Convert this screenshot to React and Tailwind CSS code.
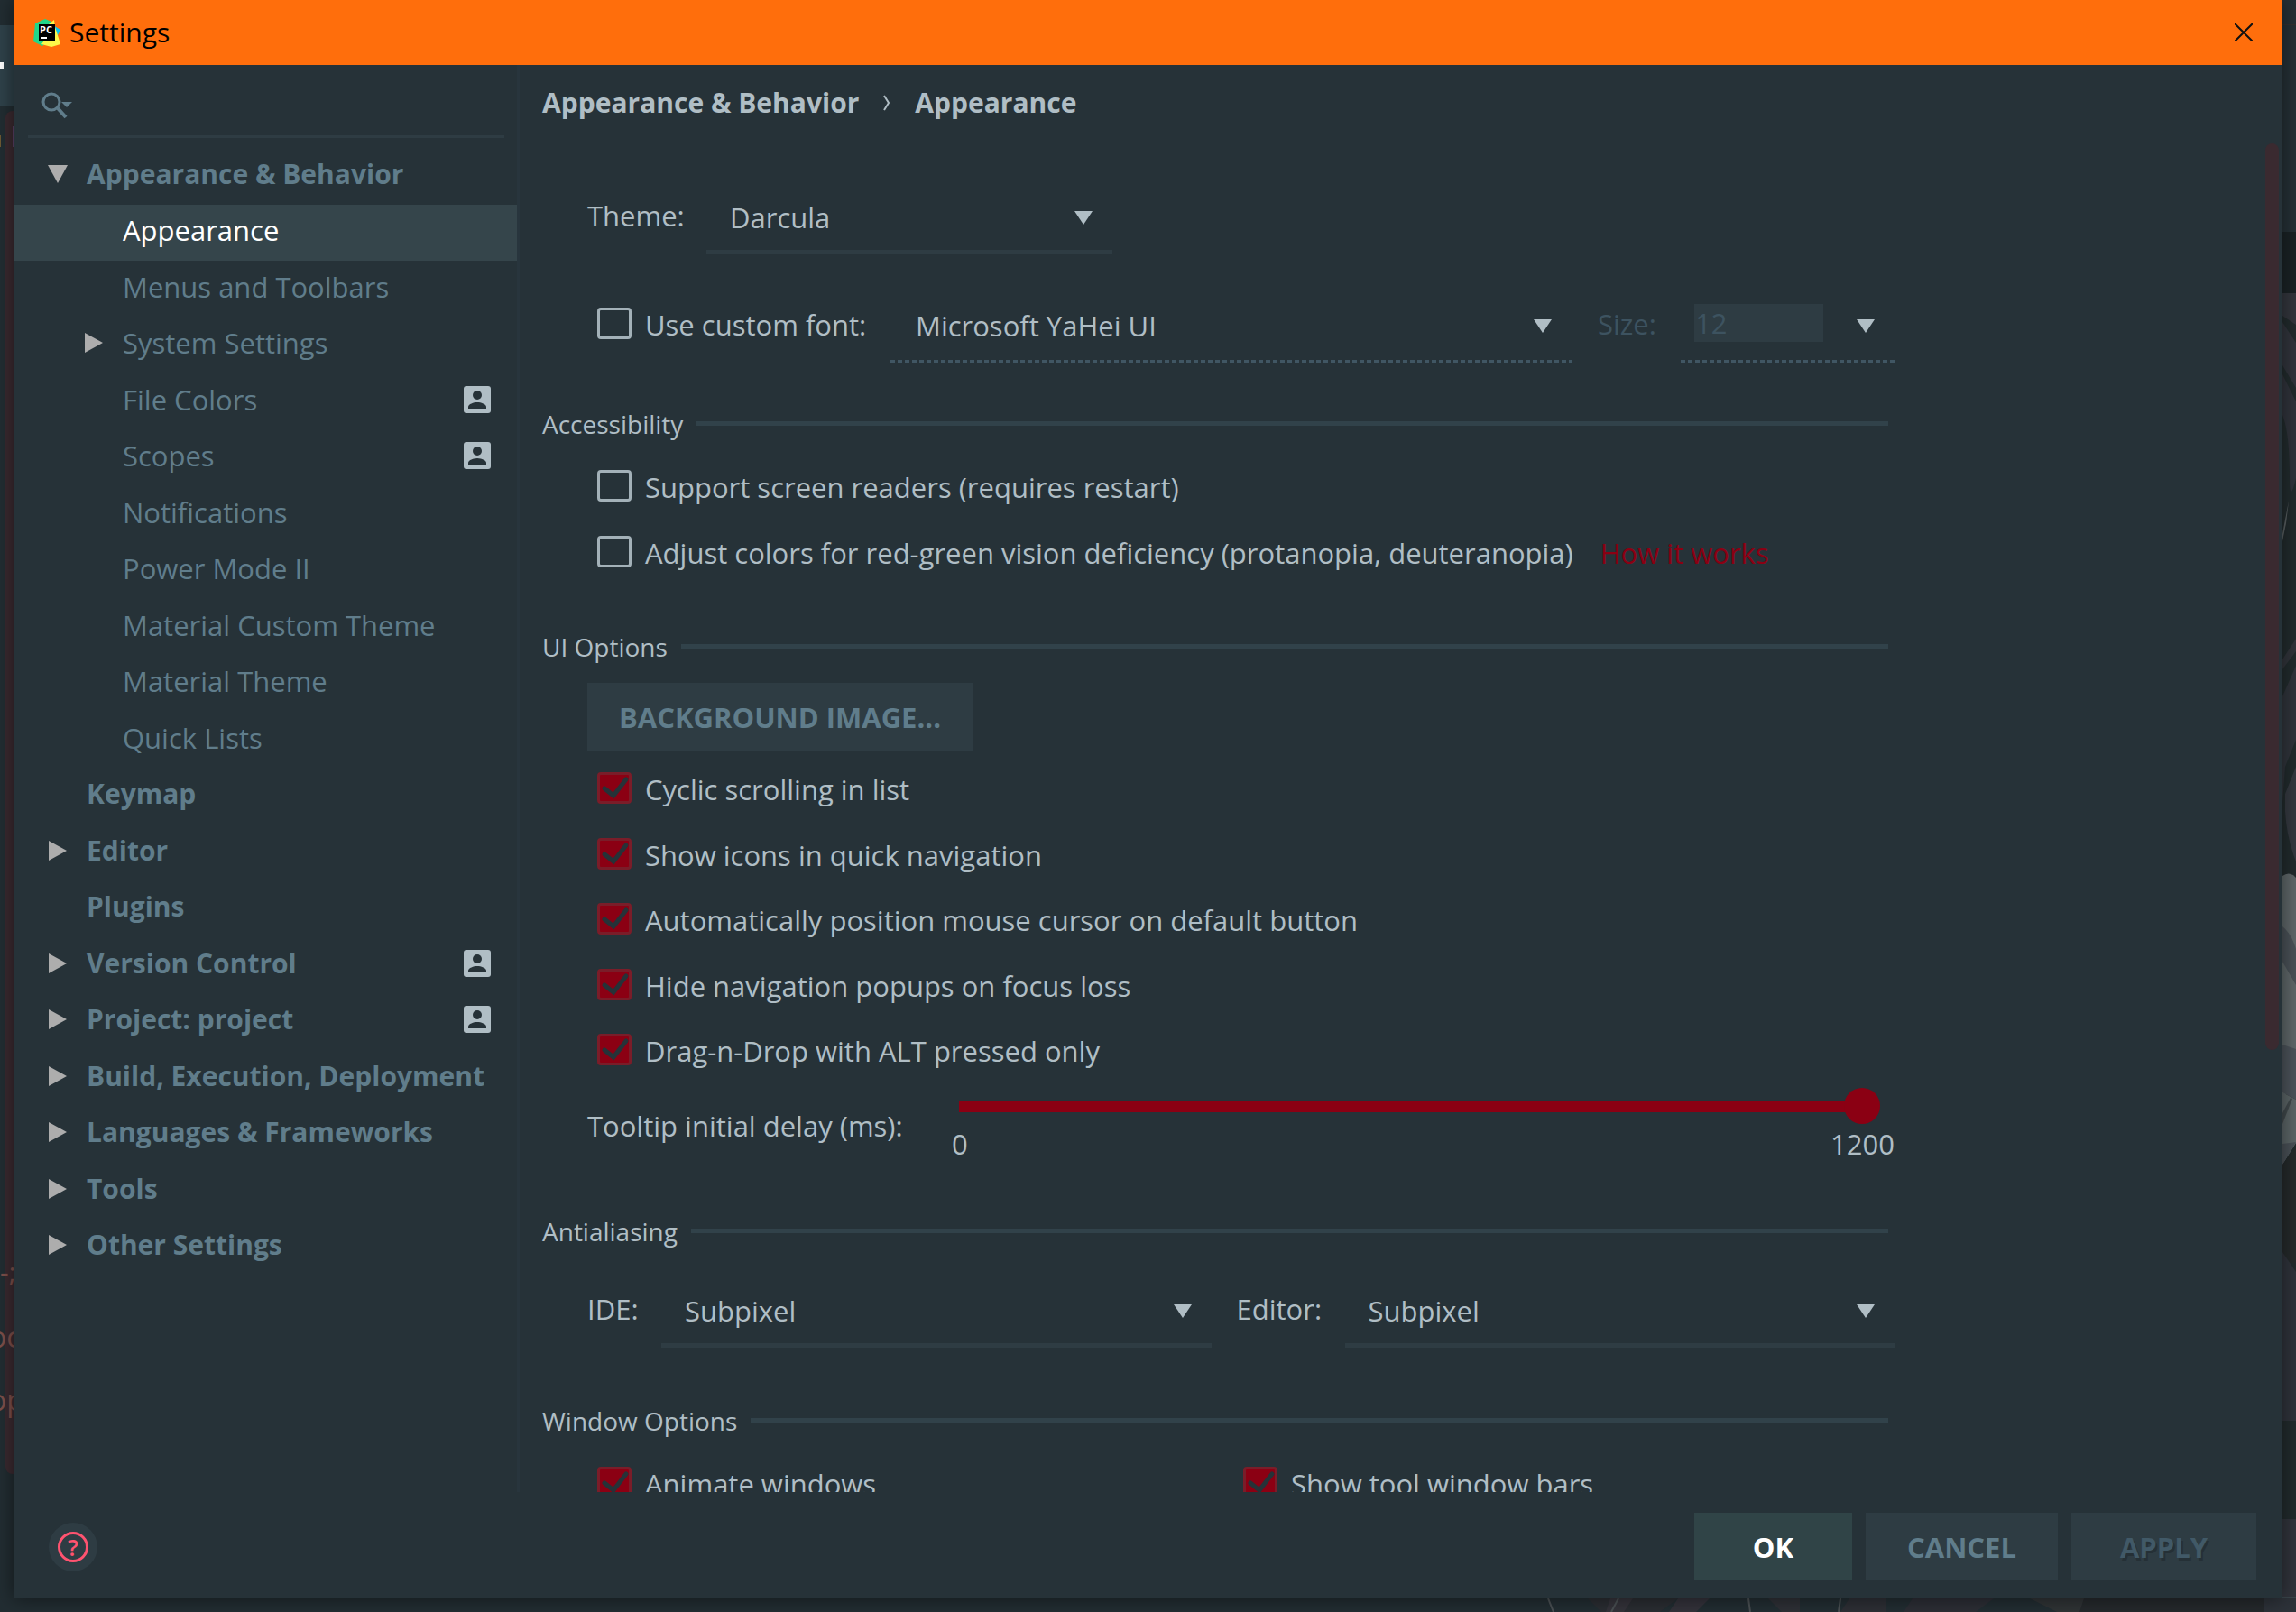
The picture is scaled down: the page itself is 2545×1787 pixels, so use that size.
import React, { useState } from "react";

const tree = [
  { label: "Appearance & Behavior", level: 0, arrow: "down" },
  { label: "Appearance", level: 1, selected: true },
  { label: "Menus and Toolbars", level: 1 },
  { label: "System Settings", level: 1, arrow: "right" },
  { label: "File Colors", level: 1, badge: true },
  { label: "Scopes", level: 1, badge: true },
  { label: "Notifications", level: 1 },
  { label: "Power Mode II", level: 1 },
  { label: "Material Custom Theme", level: 1 },
  { label: "Material Theme", level: 1 },
  { label: "Quick Lists", level: 1 },
  { label: "Keymap", level: 0 },
  { label: "Editor", level: 0, arrow: "right" },
  { label: "Plugins", level: 0 },
  { label: "Version Control", level: 0, arrow: "right", badge: true },
  { label: "Project: project", level: 0, arrow: "right", badge: true },
  { label: "Build, Execution, Deployment", level: 0, arrow: "right" },
  { label: "Languages & Frameworks", level: 0, arrow: "right" },
  { label: "Tools", level: 0, arrow: "right" },
  { label: "Other Settings", level: 0, arrow: "right" },
];

function TreeArrow({ dir }) {
  if (!dir) return null;
  return (
    <svg viewBox="0 0 22 22" className="size-[22px]" fill="#adadad" aria-hidden="true">
      {dir === "down" ? <path d="M0 1H22L11 21Z" /> : <path d="M1 0V22L21 11Z" />}
    </svg>
  );
}

function Badge() {
  return (
    <svg viewBox="0 0 30 30" className="size-[30px]" aria-hidden="true">
      <rect width="30" height="30" rx="3" fill="#b0bec5" />
      <circle cx="15" cy="10" r="5" fill="#263238" />
      <path d="M5 25v-2c0-3 6-5 10-5s10 2 10 5v2Z" fill="#263238" />
    </svg>
  );
}

function TreeItem({ item }) {
  return (
    <li className={item.selected ? "bg-[#35454b]" : ""}>
      <button
        type="button"
        className={
          "flex h-full w-full items-center pr-[29px] pb-[5px] text-left whitespace-nowrap " +
          (item.level ? "pl-[77px] " : "pl-[37px] text-[30px] font-bold ") +
          (item.selected ? "text-white" : "text-[#607d8b]")
        }
      >
        <span className="w-[43px] shrink-0">
          <TreeArrow dir={item.arrow} />
        </span>
        <span className="flex-1">{item.label}</span>
        {item.badge && <Badge />}
      </button>
    </li>
  );
}

function ComboArrow() {
  return (
    <svg
      viewBox="0 0 20 15"
      className="pointer-events-none absolute top-[22px] right-[22px] h-[15px] w-[20px]"
      fill="#b0bec5"
      aria-hidden="true"
    >
      <path d="M0 0H20L10 15Z" />
    </svg>
  );
}

function Dots() {
  return (
    <div className="h-[3px] bg-[repeating-linear-gradient(90deg,#405663_0_5px,transparent_5px_8px)]" />
  );
}

function Combo({ id, value, className, dotted }) {
  return (
    <div className={"relative flex h-[70px] flex-col " + className}>
      <select
        id={id}
        defaultValue={value}
        className={
          "min-h-0 w-full flex-1 appearance-none bg-transparent outline-none " +
          (dotted ? "pb-[10px] pl-[28px]" : "pb-[8px] pl-[26px]")
        }
      >
        <option>{value}</option>
      </select>
      {dotted ? <Dots /> : <div className="h-[5px] bg-[#2e3c43]" />}
      <ComboArrow />
    </div>
  );
}

function Check({ label, checked, className = "" }) {
  const [on, setOn] = useState(!!checked);
  return (
    <label className={"flex h-[35px] shrink-0 items-center gap-[15px] whitespace-nowrap " + className}>
      <span className="relative h-[35px] w-[38px] shrink-0">
        <input
          type="checkbox"
          checked={on}
          onChange={() => setOn(!on)}
          className="block h-full w-full appearance-none rounded-[4px] border-[3px] border-[#a3b1b8] checked:border-[#7a1d29] checked:bg-[#8b0013]"
        />
        {on && (
          <svg
            viewBox="0 0 38 35"
            className="pointer-events-none absolute inset-0"
            fill="none"
            stroke="#263238"
            strokeWidth="5"
            strokeLinecap="round"
            aria-hidden="true"
          >
            <path d="M8 18L18 26L32 8" />
          </svg>
        )}
      </span>
      <span className="pt-[3px]">{label}</span>
    </label>
  );
}

function SectionTitle({ children, className }) {
  return (
    <div className={"mr-[7px] flex h-[39px] items-center gap-[15px] " + className}>
      <h2 className="text-[28px] whitespace-nowrap">{children}</h2>
      <div className="h-[5px] flex-1 bg-[#31424a]" />
    </div>
  );
}

function AppIcon() {
  return (
    <svg viewBox="0 0 30 31" className="h-[31px] w-[30px]" aria-hidden="true">
      <path d="M2 5L13 0L20 3L22 20L10 30L0 25Z" fill="#21d789" />
      <path d="M22 7L30 12L26 20Z" fill="#07c3f2" />
      <path d="M17 6L23 1L24 9L26 15L30 28L20 31L9 28L12 24Z" fill="#fcf84a" />
      <rect x="6" y="6" width="18" height="18" fill="#000" />
      <text x="7" y="16" fontSize="11" fontWeight="700" fontFamily="Open Sans, sans-serif" fill="#fff">
        PC
      </text>
      <rect x="8" y="20" width="7" height="2" fill="#fff" />
    </svg>
  );
}

/* Editor window that stays visible around the edges of the dialog. */
function Backdrop() {
  return (
    <div className="absolute inset-0 overflow-hidden bg-[#222d32]" aria-hidden="true">
      <div className="absolute top-[28px] left-0 h-[89px] w-[15px] bg-[#2f424a]" />
      <div className="absolute top-[69px] left-0 h-[8px] w-[4px] bg-white" />
      <div className="absolute top-[123px] left-[6px] h-[1511px] w-[20px] rounded-[8px] bg-[#3a2a30]" />
      <div className="absolute top-[150px] left-0 h-[13px] w-[1px] bg-[#6f5a34]" />
      <div className="absolute top-[140px] left-[14px] h-[23px] w-[1px] bg-[#5d4168]" />
      <div className="absolute top-[1390px] left-0 text-[30px] leading-[40px] text-[#7d4f4a]">-;</div>
      <div className="absolute top-[1460px] left-[-12px] text-[32px] leading-[44px] text-[#7d4f4a]">oc</div>
      <div className="absolute top-[1530px] left-[-12px] text-[32px] leading-[44px] text-[#7d4f4a]">op</div>
      <svg
        viewBox="0 0 15 1787"
        preserveAspectRatio="none"
        className="absolute inset-y-0 right-0 h-full w-[15px]"
      >
        <rect width="15" height="1787" fill="#222b2d" />
        <rect width="15" height="257" fill="#253036" />
        <rect y="27" width="15" height="1" fill="#33302f" />
        <rect y="257" width="15" height="68" fill="#1a2225" />
        <path d="M0 325H15V360L0 350Z" fill="#33363d" />
        <path d="M0 357L15 380V430L0 405Z" fill="#31343c" />
        <path d="M0 415L15 445V530Q8 560 8 530Q8 480 0 460Z" fill="#30333b" />
        <path d="M0 592L7 555L4 580L0 600Z" fill="#5b6163" />
        <path d="M0 731L15 708V722L0 742Z" fill="#31343a" />
        <path d="M0 772L15 738V820L3 850L0 890Z" fill="#30343b" />
        <path d="M3 880L15 850V955Q5 930 3 900Z" fill="#353940" />
        <path d="M0 971Q8 965 15 973V1190L0 1220V971Z" fill="#5f6769" />
        <path d="M0 1027Q10 1035 15 1052V1092L0 1066Z" fill="#4a5157" />
        <path d="M0 1158L15 1163V1219L0 1211Z" fill="#4c535a" />
        <path d="M0 1211L15 1219V1267L0 1291Z" fill="#5c6567" />
        <path d="M0 1234L9 1217L11 1218L0 1246Z" fill="#41494c" />
        <path d="M0 1268L15 1266L0 1291Z" fill="#4a5157" />
        <path d="M0 1291L15 1272V1400H0Z" fill="#252a2b" />
        <path d="M0 1388L15 1410V1575H0Z" fill="#2f333b" />
        <rect y="1684" width="15" height="86" fill="#31343c" />
        <rect y="1770" width="15" height="2" fill="#3a454b" />
        <rect y="1772" width="15" height="15" fill="#2d3239" />
      </svg>
      <svg
        viewBox="0 0 855 15"
        preserveAspectRatio="none"
        className="absolute right-0 bottom-0 h-[15px] w-[855px]"
      >
        <path d="M70 0H170L150 15H85Z" fill="#2a2d32" />
        <path d="M95 0H120L110 15H90Z" fill="#34333a" />
        <path d="M170 0H205L190 15H160Z" fill="#33323a" />
        <path d="M270 0H305V15H285Z" fill="#2e3036" />
        <path d="M360 0H400V15H350Z" fill="#2d2f35" />
        <path d="M430 0H520L500 15H420Z" fill="#2c2e35" />
        <path d="M560 0H640V15H590Z" fill="#2f3335" />
        <path d="M620 0H820V15H615Z" fill="#25292c" />
        <path d="M26 0L32 15M104 0L96 15M248 0L250 15M350 0L348 15" stroke="#4a5053" strokeWidth="2" />
        <rect x="820" width="35" height="15" fill="#2d3239" />
      </svg>
    </div>
  );
}

export default function App() {
  return (
    <div className="relative flex h-screen flex-col font-['Open_Sans','Noto_Sans',sans-serif] text-[31px] leading-[44px] text-[#b0bec5]">
      <Backdrop />
      <div
        role="dialog"
        aria-label="Settings"
        className="relative mx-[15px] mb-[15px] flex min-h-0 flex-1 flex-col border-x border-b border-[#ff7a22] bg-[#263238] shadow-[0_0_20px_rgba(0,0,0,0.5)]"
      >
        <header className="flex h-[72px] shrink-0 items-center bg-[#ff6e0c] pr-[32px] pl-[21px] text-[30px] text-black">
          <AppIcon />
          <h1 className="flex-1 pl-[10px]">Settings</h1>
          <button type="button" aria-label="Close">
            <svg viewBox="0 0 20 20" className="size-[20px]" stroke="#111" strokeWidth="2" aria-hidden="true">
              <path d="M0 0L20 20M20 0L0 20" />
            </svg>
          </button>
        </header>

        <div className="flex min-h-0 flex-1">
          <nav className="w-[560px] shrink-0 border-r-[3px] border-[#28353d]">
            <div className="mr-[14px] ml-[15px] flex h-[81px] items-center border-b-[3px] border-[#2e3c43] pt-[12px] pl-[15px]">
              <svg viewBox="0 0 36 34" className="h-[34px] w-[36px] shrink-0" fill="none" aria-hidden="true">
                <ellipse cx="11" cy="13" rx="9" ry="9" stroke="#607d8b" strokeWidth="3" />
                <path d="M18 20L27 30" stroke="#607d8b" strokeWidth="4" />
                <path d="M22 13H34L28 19Z" fill="#607d8b" />
              </svg>
              <input aria-label="Search settings" className="min-w-0 flex-1 bg-transparent outline-none" />
            </div>
            <ul className="mt-[11px] grid h-[1250px] auto-rows-fr">
              {tree.map((item) => (
                <TreeItem key={item.label} item={item} />
              ))}
            </ul>
          </nav>

          <main className="flex min-w-0 flex-1 flex-col">
            <div className="flex h-[87px] shrink-0 items-center pb-[4px] pl-[25px] text-[30px] font-bold">
              <span>Appearance &amp; Behavior</span>
              <svg viewBox="0 0 8 18" className="mx-[27px] h-[18px] w-[8px]" fill="none" stroke="#b0bec5" strokeWidth="2" aria-hidden="true">
                <path d="M1 1L6 9L1 17" />
              </svg>
              <span>Appearance</span>
            </div>

            <div className="relative min-h-0 flex-1 overflow-hidden pr-[429px] pl-[25px]">
              <div className="absolute top-0 right-[3px] h-[1005px] w-[15px] rounded-full bg-[#3a2a30]" />

              <div className="flex items-center pt-[53px] pl-[50px]">
                <label htmlFor="theme" className="w-[132px] pb-[17px]">Theme:</label>
                <Combo id="theme" value="Darcula" className="w-[450px]" />
              </div>

              <div className="mt-[50px] flex pl-[61px]">
                <Check label="Use custom font:" className="mt-[9px] w-[325px]" />
                <Combo id="font" value="Microsoft YaHei UI" dotted className="flex-1" />
                <label htmlFor="size" className="w-[121px] pt-[5px] pl-[29px] text-[#3d5360]">Size:</label>
                <div className="relative flex h-[70px] w-[237px] flex-col justify-between pt-[5px]">
                  <input
                    id="size"
                    defaultValue="12"
                    disabled
                    className="ml-[15px] h-[42px] w-[143px] bg-[#2e3c43] pl-[1px] text-[#3d5360]"
                  />
                  <Dots />
                  <ComboArrow />
                </div>
              </div>

              <SectionTitle className="mt-[48px]">Accessibility</SectionTitle>
              <div className="mt-[32px] flex flex-col gap-[38px] pl-[61px]">
                <Check label="Support screen readers (requires restart)" />
                <div className="flex items-center gap-[30px]">
                  <Check label="Adjust colors for red-green vision deficiency (protanopia, deuteranopia)" />
                  <a href="#how" className="h-[35px] pt-[2px] leading-[35px] whitespace-nowrap text-[#8b0013]">How it works</a>
                </div>
              </div>

              <SectionTitle className="mt-[68px]">UI Options</SectionTitle>
              <button
                type="button"
                className="mt-[21px] ml-[50px] block h-[75px] w-[427px] bg-[#2e3c43] font-bold whitespace-nowrap text-[#607d8b]"
              >
                BACKGROUND IMAGE...
              </button>
              <div className="mt-[24px] flex h-[325px] flex-col justify-between pl-[61px]">
                <Check checked label="Cyclic scrolling in list" />
                <Check checked label="Show icons in quick navigation" />
                <Check checked label="Automatically position mouse cursor on default button" />
                <Check checked label="Hide navigation popups on focus loss" />
                <Check checked label="Drag-n-Drop with ALT pressed only" />
              </div>

              <div className="mt-[25px] flex items-center pl-[50px]">
                <label htmlFor="delay" className="w-[404px] whitespace-nowrap">Tooltip initial delay (ms):</label>
                <div className="flex-1">
                  <div className="mr-[16px] ml-[8px] flex">
                    <input
                      id="delay"
                      type="range"
                      min="0"
                      max="1200"
                      defaultValue="1200"
                      className="h-[40px] w-full appearance-none bg-[linear-gradient(#8b0013,#8b0013)] bg-[length:calc(100%-20px)_13px] bg-left bg-no-repeat [&::-webkit-slider-thumb]:size-[40px] [&::-webkit-slider-thumb]:appearance-none [&::-webkit-slider-thumb]:rounded-full [&::-webkit-slider-thumb]:bg-[#8b0013]"
                    />
                  </div>
                  <div className="flex justify-between">
                    <span>0</span>
                    <span>1200</span>
                  </div>
                </div>
              </div>

              <SectionTitle className="mt-[55px]">Antialiasing</SectionTitle>
              <div className="mt-[40px] flex items-center pl-[50px]">
                <label htmlFor="ide" className="w-[82px] pb-[17px]">IDE:</label>
                <Combo id="ide" value="Subpixel" className="flex-1" />
                <label htmlFor="editor" className="w-[148px] pb-[17px] pl-[28px]">Editor:</label>
                <Combo id="editor" value="Subpixel" className="flex-1" />
              </div>

              <SectionTitle className="mt-[61px]">Window Options</SectionTitle>
              <div className="mt-[32px] flex pl-[61px]">
                <Check checked label="Animate windows" className="w-[716px]" />
                <Check checked label="Show tool window bars" />
              </div>
            </div>
          </main>
        </div>

        <footer className="flex h-[117px] shrink-0 items-start gap-[15px] pt-[23px] pr-[28px] pl-[38px] font-bold">
          <button
            type="button"
            aria-label="Help"
            className="mt-[11px] mr-auto flex size-[54px] items-center justify-center rounded-full bg-[#2e3c43]"
          >
            <span className="flex size-[34px] items-center justify-center rounded-full border-[3px] border-[#ff5370] text-[26px] leading-[28px] font-semibold text-[#ff5370]">
              ?
            </span>
          </button>
          <button type="button" className="h-[75px] w-[175px] bg-[#304447] text-white">OK</button>
          <button type="button" className="h-[75px] w-[213px] bg-[#2e3c43] text-[#607d8b]">CANCEL</button>
          <button
            type="button"
            disabled
            className="h-[75px] w-[205px] bg-[#2e3c43] text-[#415967] [text-shadow:2px_3px_0_#253036]"
          >
            APPLY
          </button>
        </footer>
      </div>
    </div>
  );
}
